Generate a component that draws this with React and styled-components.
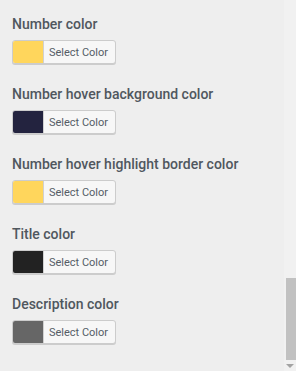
import React from "react";
import styled, { createGlobalStyle } from "styled-components";

const Global = createGlobalStyle`
  html, body { margin: 0; padding: 0; background: #eeeeee; }
  body { font-family: Roboto, "Noto Sans", sans-serif; }
`;

const Frame = styled.div`
  display: flex;
  height: 371px;
  width: 296px;
  overflow: hidden;
  background: #eeeeee;
`;

const Panel = styled.div`
  flex: 1;
  display: flex;
  flex-direction: column;
  gap: 20px;
  padding: 14px 0 0 12px;
`;

const Field = styled.div`
  display: flex;
  flex-direction: column;
  gap: 6px;
`;

const Label = styled.div`
  font-size: 14px;
  line-height: 20px;
  font-weight: 500;
  color: #50575e;
  white-space: nowrap;
`;

const ColorButton = styled.button`
  display: flex;
  align-items: stretch;
  width: 104px;
  height: 24px;
  padding: 0;
  border: 1px solid #cccccc;
  border-radius: 3px;
  background: #f7f7f7;
  overflow: hidden;
  box-shadow: 0 1px 0 #cccccc;
  cursor: pointer;
  font-family: Roboto, "Noto Sans", sans-serif;
`;

const Swatch = styled.span`
  width: 30px;
  background: ${(p) => p.$color};
  border-right: 1px solid #d0d0d0;
`;

const ButtonText = styled.span`
  flex: 1;
  display: flex;
  align-items: center;
  justify-content: center;
  font-size: 11px;
  color: #555d66;
  padding-right: 2px;
`;

const Scrollbar = styled.div`
  width: 12px;
  background: #f1f1f1;
  display: flex;
  flex-direction: column;
  align-items: flex-end;
`;

const Track = styled.div`
  flex: 1;
  width: 10px;
  display: flex;
  flex-direction: column;
  justify-content: flex-end;
`;

const Thumb = styled.div`
  height: 82px;
  width: 10px;
  background: #c1c1c1;
`;

const Arrow = styled.div`
  height: 11px;
  width: 12px;
  display: flex;
  align-items: center;
  justify-content: center;
`;

const fields = [
  { label: "Number color", color: "#ffd65c" },
  { label: "Number hover background color", color: "#23233f" },
  { label: "Number hover highlight border color", color: "#ffd65c" },
  { label: "Title color", color: "#222222" },
  { label: "Description color", color: "#666666" },
];

export default function App() {
  return (
    <>
      <Global />
      <Frame>
        <Panel>
          {fields.map((f) => (
            <Field key={f.label}>
              <Label>{f.label}</Label>
              <ColorButton type="button">
                <Swatch $color={f.color} />
                <ButtonText>Select Color</ButtonText>
              </ColorButton>
            </Field>
          ))}
        </Panel>
        <Scrollbar>
          <Track>
            <Thumb />
          </Track>
          <Arrow>
            <svg width="8" height="4" viewBox="0 0 8 4">
              <path d="M0 0 H8 L4 4 Z" fill="#a3a3a3" />
            </svg>
          </Arrow>
        </Scrollbar>
      </Frame>
    </>
  );
}
